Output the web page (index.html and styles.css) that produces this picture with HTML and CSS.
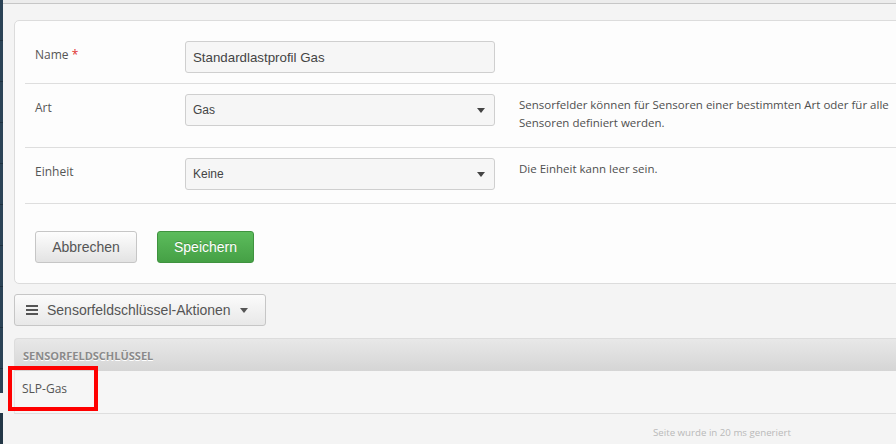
FILE: index.html
```html
<!DOCTYPE html>
<html lang="de">
<head>
<meta charset="utf-8">
<title>Sensorfeld</title>
<link rel="stylesheet" href="styles.css">
</head>
<body>
<div class="page">
  <div class="sidebar">
    <div class="sb-seg"></div>
    <div class="sb-gap"></div>
    <div class="sb-seg sb-end"></div>
  </div>
  <div class="main">
    <div class="topbar"></div>
    <div class="content">
      <form class="card">
        <div class="row row-name">
          <label class="lbl">Name <span class="req">*</span></label>
          <div class="field"><input class="input" type="text" value="Standardlastprofil Gas"></div>
        </div>
        <div class="row row-art">
          <label class="lbl">Art</label>
          <div class="field"><div class="select"><span>Gas</span><span class="caret"></span></div></div>
          <p class="help">Sensorfelder können für Sensoren einer bestimmten Art oder für alle Sensoren definiert werden.</p>
        </div>
        <div class="row row-unit">
          <label class="lbl">Einheit</label>
          <div class="field"><div class="select"><span>Keine</span><span class="caret"></span></div></div>
          <p class="help">Die Einheit kann leer sein.</p>
        </div>
        <div class="actions">
          <button type="button" class="btn btn-default">Abbrechen</button>
          <button type="button" class="btn btn-success">Speichern</button>
        </div>
      </form>

      <button type="button" class="btn btn-default dropdown">
        <svg class="burger" width="12" height="10" viewBox="0 0 12 10"><rect x="0" y="0" width="12" height="2"/><rect x="0" y="4" width="12" height="2"/><rect x="0" y="8" width="12" height="2"/></svg>
        <span>Sensorfeldschlüssel-Aktionen</span>
        <span class="caret small"></span>
      </button>

      <div class="table">
        <div class="thead">Sensorfeldschlüssel</div>
        <div class="trow">
          <span class="cell">SLP-Gas</span>
          <div class="highlight"></div>
        </div>
      </div>

      <div class="footer">Seite wurde in 20 ms generiert</div>
    </div>
  </div>
</div>
</body>
</html>
```
FILE: styles.css
```css
html, body {
  margin: 0;
  padding: 0;
  background: #f4f4f4;
  font-family: "Liberation Sans", Arial, sans-serif;
  color: #555;
}

.page {
  display: flex;
  width: 896px;
  height: 444px;
  overflow: hidden;
}

.sidebar {
  width: 3px;
  flex: 0 0 3px;
  display: flex;
  flex-direction: column;
}
.sb-seg {
  height: 393px;
  background: repeating-linear-gradient(#2b4356 0, #2b4356 40px, #1f3140 40px, #1f3140 41px);
}
.sb-gap {
  height: 20px;
  background: #f4f4f4;
}
.sb-seg.sb-end {
  height: 31px;
  background: #233746;
}

.main {
  flex: 1;
  min-width: 0;
  overflow: hidden;
}

.topbar {
  height: 3px;
  background: #ececec;
  border-bottom: 1px solid #c6c6c6;
}

.content {
  padding: 16px 0 0 11px;
}

.card {
  margin: 0 -30px 0 0;
  background: #fdfdfd;
  border: 1px solid #dcdcdc;
  border-radius: 5px;
  padding: 0 0 0 10px;
}

.row {
  display: flex;
  align-items: flex-start;
  border-bottom: 1px solid #dedede;
  padding-left: 10px;
}
.row-name { padding-top: 20px; padding-bottom: 10px; }
.row-art { padding-top: 10px; padding-bottom: 15px; }
.row-unit { padding-top: 10px; padding-bottom: 13px; }

.lbl {
  width: 150px;
  flex: 0 0 150px;
  font-family: "Open Sans", sans-serif;
  font-size: 12px;
  line-height: 16px;
  padding-top: 6px;
  color: #555;
}
.req { color: #e03030; }

.field {
  width: 310px;
  flex: 0 0 310px;
}

.input, .select {
  box-sizing: border-box;
  width: 310px;
  height: 32px;
  background: #f6f6f6;
  border: 1px solid #cfcfcf;
  border-radius: 3px;
  font-family: "Liberation Sans", Arial, sans-serif;
  color: #444;
  margin: 0;
}
.input {
  font-size: 13.3px;
  padding: 0 7px;
  outline: none;
}
.select {
  display: flex;
  align-items: center;
  justify-content: space-between;
  padding: 0 9px 0 7px;
  font-size: 12px;
}

.caret {
  width: 0;
  height: 0;
  border-left: 4px solid transparent;
  border-right: 4px solid transparent;
  border-top: 5px solid #444;
}
.caret.small {
  border-top-color: #555;
  margin-left: 9px;
}

.help {
  margin: 0 0 0 24px;
  padding-top: 2px;
  font-family: "Open Sans", sans-serif;
  font-size: 11.5px;
  line-height: 18px;
  color: #4f4f4f;
  width: 380px;
}

.actions {
  display: flex;
  gap: 20px;
  padding: 27px 0 20px 10px;
}

.btn {
  box-sizing: border-box;
  height: 32px;
  border-radius: 3px;
  font-family: "Liberation Sans", Arial, sans-serif;
  font-size: 14px;
  padding: 0;
  margin: 0;
  cursor: pointer;
}
.btn-default {
  background: linear-gradient(#fdfdfd, #e3e3e3);
  border: 1px solid #c6c6c6;
  color: #555;
  width: 102px;
}
.btn-success {
  background: linear-gradient(#5cbc5c, #45a045);
  border: 1px solid #3f933f;
  color: #fff;
  width: 97px;
  text-shadow: 0 -1px 0 rgba(0,0,0,0.2);
}

.dropdown {
  display: flex;
  align-items: center;
  width: 252px;
  margin-top: 10px;
  padding-left: 11px;
  background: linear-gradient(#fbfbfb, #e8e8e8);
}
.burger {
  fill: #555;
  margin-right: 9px;
}

.table {
  margin: 12px -30px 0 0;
}
.thead {
  height: 33px;
  box-sizing: border-box;
  border-top: 1px solid #dcdcdc;
  border-left: 1px solid #dcdcdc;
  border-radius: 4px 0 0 0;
  background: linear-gradient(#e8e8e8, #d5d5d5);
  padding-left: 8px;
  display: flex;
  align-items: center;
  text-transform: uppercase;
  font-family: "Open Sans", sans-serif;
  font-weight: 700;
  font-size: 11px;
  color: #8a8a8a;
  text-shadow: 0 1px 0 #fff;
}
.trow {
  position: relative;
  height: 43px;
  box-sizing: border-box;
  border-bottom: 1px solid #dedede;
  border-left: 1px solid #e6e6e6;
  background: #f6f6f6;
  padding: 8px 0 0 7px;
}
.cell {
  font-family: "Open Sans", sans-serif;
  font-size: 12px;
  color: #555;
}
.highlight {
  position: absolute;
  left: -7px;
  top: -5px;
  width: 82px;
  height: 37px;
  border: 4px solid #ff0000;
}

.footer {
  padding: 12px 0 0 639px;
  font-family: "Open Sans", sans-serif;
  font-size: 9.7px;
  color: #b9b9b9;
}
```
